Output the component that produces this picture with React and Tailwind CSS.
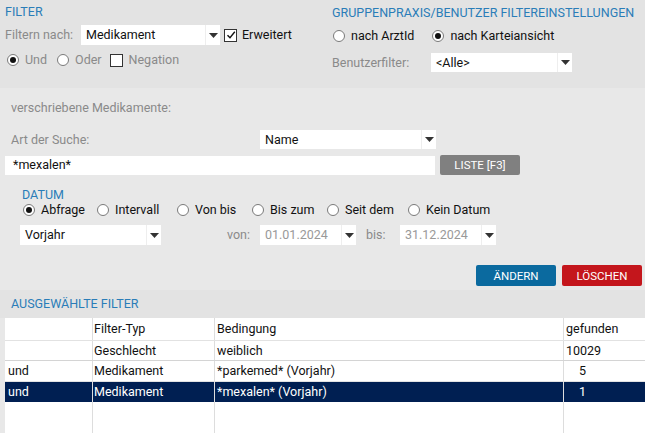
import React from "react";

const Radio = ({ checked }) => (
  <span className="w-[12px] h-[12px] rounded-full border border-[#7a7a7a] bg-white flex items-center justify-center shrink-0">
    {checked && <span className="w-[6px] h-[6px] rounded-full bg-[#111]" />}
  </span>
);

const Checkbox = ({ checked }) => (
  <span className="w-[13px] h-[13px] border border-[#333] bg-white flex items-center justify-center shrink-0">
    {checked && (
      <svg width="10" height="10" viewBox="0 0 10 10">
        <path d="M1.5 5.2 L4 7.8 L8.8 1.8" fill="none" stroke="#111" strokeWidth="1.4" />
      </svg>
    )}
  </span>
);

const Arrow = () => (
  <svg width="9" height="5" viewBox="0 0 9 5">
    <path d="M0 0 H9 L4.5 5 Z" fill="#333" />
  </svg>
);

const Select = ({ value, className, muted }) => (
  <div className={"bg-white flex items-center h-[19px] " + className}>
    <span className={"flex-1 pl-[5px] truncate " + (muted ? "text-[#999]" : "text-[#111]")}>
      {value}
    </span>
    <span className="w-[15px] h-full border-l border-[#eeeeee] flex items-center justify-center">
      <Arrow />
    </span>
  </div>
);

const RadioLabel = ({ checked, label, className }) => (
  <label className={"flex items-center gap-[6px] " + (className || "")}>
    <Radio checked={checked} />
    <span>{label}</span>
  </label>
);

const rows = [
  { op: "", typ: "Filter-Typ", bed: "Bedingung", n: "gefunden", h: "h-[23px]", line: "border-[#e2e2e2]" },
  { op: "", typ: "Geschlecht", bed: "weiblich", n: "10029", h: "h-[20px]", line: "border-[#d4d4d4]" },
  { op: "und", typ: "Medikament", bed: "*parkemed* (Vorjahr)", n: "5", h: "h-[21px]", line: "border-[#e2e2e2]", pad: true },
  { op: "und", typ: "Medikament", bed: "*mexalen* (Vorjahr)", n: "1", h: "h-[20px]", sel: true, pad: true },
];

export default function App() {
  return (
    <div className="w-[645px] h-[433px] overflow-hidden bg-[#e8e8e8] font-['Roboto',sans-serif] text-[12.5px] text-[#111] leading-[16px]">
      {/* top filter settings */}
      <div className="h-[88px] bg-[#e3e3e3] flex">
        <div className="w-[332px] pl-[5px] pt-[4px]">
          <div className="text-[#2a7db8]">FILTER</div>
          <div className="flex items-center mt-[5px] h-[20px]">
            <span className="w-[76px] text-[#8a8a8a]">Filtern nach:</span>
            <Select value="Medikament" className="w-[139px] h-[20px]" />
            <span className="ml-[4px]"><Checkbox checked /></span>
            <span className="ml-[5px]">Erweitert</span>
          </div>
          <div className="flex items-center mt-[8px] h-[14px] text-[#8a8a8a]">
            <RadioLabel checked label="Und" className="ml-[2px]" />
            <RadioLabel label="Oder" className="ml-[10px]" />
            <label className="flex items-center gap-[6px] ml-[8px]">
              <Checkbox />
              <span>Negation</span>
            </label>
          </div>
        </div>
        <div className="flex-1 pt-[5px]">
          <div className="text-[#2a7db8]">GRUPPENPRAXIS/BENUTZER FILTEREINSTELLUNGEN</div>
          <div className="flex items-center mt-[7px] h-[16px]">
            <RadioLabel label="nach ArztId" className="ml-[1px]" />
            <RadioLabel checked label="nach Karteiansicht" className="ml-[18px]" />
          </div>
          <div className="flex items-center mt-[9px]">
            <span className="w-[99px] text-[#8a8a8a]">Benutzerfilter:</span>
            <Select value="<Alle>" className="w-[141px]" />
          </div>
        </div>
      </div>

      {/* medication filter */}
      <div className="h-[202px] pt-[12px]">
        <div className="pl-[11px] text-[#8a8a8a]">verschriebene Medikamente:</div>
        <div className="flex items-center mt-[14px] pl-[11px]">
          <span className="w-[249px] text-[#8a8a8a]">Art der Suche:</span>
          <Select value="Name" className="w-[176px]" />
        </div>
        <div className="flex items-center mt-[6px] pl-[5px]">
          <div className="w-[430px] h-[19px] bg-white pl-[8px] flex items-center">*mexalen*</div>
          <button className="ml-[5px] w-[80px] h-[20px] bg-[#808080] text-white text-[11.5px] rounded-[2px]">
            LISTE [F3]
          </button>
        </div>
        <div className="pl-[22px] mt-[13px] text-[#2a7db8] leading-[14px]">DATUM</div>
        <div className="flex items-center mt-[1px] h-[14px] pl-[23px]">
          <RadioLabel checked label="Abfrage" className="w-[74px]" />
          <RadioLabel label="Intervall" className="w-[80px]" />
          <RadioLabel label="Von bis" className="w-[75px]" />
          <RadioLabel label="Bis zum" className="w-[75px]" />
          <RadioLabel label="Seit dem" className="w-[81px]" />
          <RadioLabel label="Kein Datum" />
        </div>
        <div className="flex items-center mt-[8px] pl-[20px] h-[20px]">
          <Select value="Vorjahr" className="w-[141px] h-[20px]" />
          <span className="ml-[66px] w-[33px] text-[#8a8a8a]">von:</span>
          <Select value="01.01.2024" muted className="w-[96px] h-[20px]" />
          <span className="ml-[10px] w-[34px] text-[#8a8a8a]">bis:</span>
          <Select value="31.12.2024" muted className="w-[96px] h-[20px]" />
        </div>
        <div className="flex justify-end gap-[6px] pr-[3px] mt-[20px]">
          <button className="w-[80px] h-[21px] bg-[#0b6a9f] text-white text-[11.5px] rounded-[2px]">ÄNDERN</button>
          <button className="w-[80px] h-[21px] bg-[#c4161c] text-white text-[11.5px] rounded-[2px]">LÖSCHEN</button>
        </div>
      </div>

      {/* selected filters */}
      <div className="h-[28px] bg-[#e3e3e3] pl-[11px] flex items-center text-[#2a7db8]">AUSGEWÄHLTE FILTER</div>
      <div className="ml-[5px] h-[115px] bg-white flex flex-col">
        {rows.map((r, i) => (
          <div
            key={i}
            className={
              "flex shrink-0 " + r.h + " " +
              (r.sel ? "bg-[#001f52] text-white" : "border-b " + r.line)
            }
          >
            <div className="w-[88px] pl-[3px] flex items-center border-r border-[#dddddd]">{r.op}</div>
            <div className="w-[122px] pl-[1px] flex items-center border-r border-[#dddddd]">{r.typ}</div>
            <div className="w-[349px] pl-[2px] flex items-center border-r border-[#dddddd]">{r.bed}</div>
            <div className={"flex-1 flex items-center " + (r.pad ? "pl-[15px]" : "pl-[2px]")}>{r.n}</div>
          </div>
        ))}
        <div className="flex flex-1">
          <div className="w-[88px] border-r border-[#dddddd]" />
          <div className="w-[122px] border-r border-[#dddddd]" />
          <div className="w-[349px] border-r border-[#dddddd]" />
          <div className="flex-1" />
        </div>
      </div>
    </div>
  );
}
